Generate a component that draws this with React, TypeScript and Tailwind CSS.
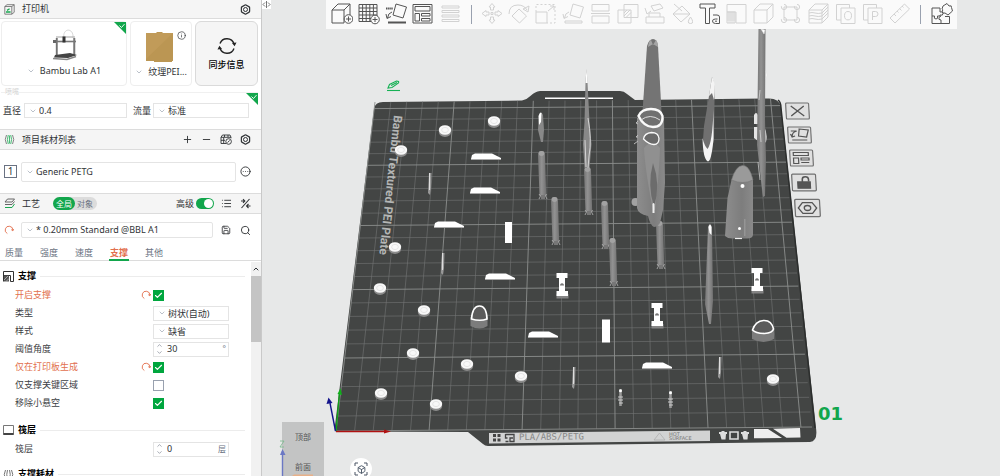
import { useId, useState, type ReactNode } from "react";
import {
  Box,
  Check,
  ChevronDown,
  ChevronUp,
  CircleEllipsis,
  Hexagon,
  Info,
  List,
  Minus,
  Plus,
  Save,
  Search,
} from "lucide-react";

/* ---------- small controls ---------- */

interface SelectFieldProps {
  id?: string;
  label?: string;
  options: string[];
  className?: string;
}

function SelectField({ id, label, options, className = "" }: SelectFieldProps) {
  return (
    <div className={`relative flex items-center border border-[#e4e4e4] bg-white ${className}`}>
      <ChevronDown
        className="pointer-events-none absolute left-1 size-2 text-gray-400"
        strokeWidth={2}
      />
      <select
        id={id}
        aria-label={label}
        className="h-full w-full appearance-none bg-transparent pl-[14px] outline-none"
      >
        {options.map((option) => (
          <option key={option}>{option}</option>
        ))}
      </select>
    </div>
  );
}

interface NumberFieldProps {
  id: string;
  initial: number;
  unit: string;
}

function NumberField({ id, initial, unit }: NumberFieldProps) {
  const [value, setValue] = useState(initial);
  return (
    <div className="flex h-[15px] w-[76px] items-center border border-[#e4e4e4] bg-white px-[2px]">
      <div className="flex flex-col text-gray-500">
        <button aria-label="增加" onClick={() => setValue(value + 1)}>
          <ChevronUp className="size-[7px]" strokeWidth={2} />
        </button>
        <button aria-label="减少" onClick={() => setValue(value - 1)}>
          <ChevronDown className="size-[7px]" strokeWidth={2} />
        </button>
      </div>
      <input
        id={id}
        value={value}
        onChange={(e) => setValue(Number(e.target.value) || 0)}
        className="w-full min-w-0 bg-transparent pl-1 text-[9px] outline-none"
      />
      <span className="shrink-0 text-[8px] text-gray-500">{unit}</span>
    </div>
  );
}

function CheckField({ id, initial }: { id: string; initial: boolean }) {
  const [checked, setChecked] = useState(initial);
  return (
    <span className="relative flex size-[11px]">
      <input
        id={id}
        type="checkbox"
        checked={checked}
        onChange={() => setChecked(!checked)}
        className="size-[11px] appearance-none border border-gray-400 bg-white checked:border-[#00a63e] checked:bg-[#00a63e]"
      />
      {checked && (
        <Check
          className="pointer-events-none absolute inset-0 m-auto size-[9px] text-white"
          strokeWidth={3}
        />
      )}
    </span>
  );
}

interface SettingRowProps {
  label: string;
  changed?: boolean;
  children: (id: string) => ReactNode;
}

function SettingRow({ label, changed, children }: SettingRowProps) {
  const id = useId();
  return (
    <div className="flex h-[18px] items-center">
      <label
        htmlFor={id}
        className={changed ? "w-[126px] text-[#e2704e]" : "w-[126px] text-[#3c4043]"}
      >
        {label}
      </label>
      <span className="flex w-3 justify-start">
        {changed && (
          <button aria-label={`重置${label}`}>
            <ResetIcon />
          </button>
        )}
      </span>
      {children(id)}
    </div>
  );
}

function ResetIcon() {
  return (
    <svg viewBox="0 0 12 12" className="size-[10px]" fill="none" stroke="#e2704e" strokeWidth="1.1">
      <path d="M4 10.2A4.6 4.6 0 1 1 10.6 6.4M8.7 5.6l1.9 1.4 1-2.1" />
    </svg>
  );
}

function GearIcon() {
  return (
    <span className="relative flex size-[11px] items-center justify-center">
      <Hexagon className="size-[11px]" strokeWidth={2.6} />
      <span className="absolute size-[5px] rounded-full border border-current" />
    </span>
  );
}

function Corner() {
  return (
    <svg viewBox="0 0 12 12" className="absolute top-0 right-0 size-3">
      <path d="M0 0h12v12z" fill="#12a64c" />
      <path d="M5.5 3.5l2 2 3-3.4" fill="none" stroke="#fff" strokeWidth=".9" />
    </svg>
  );
}

function PanelHeader({
  icon,
  title,
  children,
}: {
  icon: ReactNode;
  title: string;
  children: ReactNode;
}) {
  return (
    <header className="flex h-full items-center gap-[7px] bg-[#f5f5f5] px-1 pr-[10px]">
      {icon}
      <h2>{title}</h2>
      {children}
    </header>
  );
}

/* ---------- sidebar ---------- */

function PrinterSection() {
  return (
    <section>
      <div className="h-[19px] border-b border-[#dcdcdc]">
        <PanelHeader
          title="打印机"
          icon={
            <svg viewBox="0 0 11 11" className="size-[11px]" fill="none" stroke="#666" strokeWidth=".8">
              <path d="M.8 2.5h7v7.7h-7zM.8 2.5L3 .7h7.2v7.6l-2.4 1.9M7.8 2.5L10.2.7" />
              <path d="M2 8h4.6M3 6.400L5.6 4.800" stroke="#1aa851" strokeWidth="1.3" />
            </svg>
          }
        >
          <button aria-label="打印机设置" className="ml-auto">
            <GearIcon />
          </button>
        </PanelHeader>
      </div>

      <div className="flex gap-[3px] pt-[2px] pr-[3px] pl-px">
        <button className="relative flex h-[65px] flex-1 flex-col items-center rounded-sm border border-[#eee] pt-[7px]">
          <Corner />
          <svg viewBox="0 0 25 32" className="h-8 w-[25px]" fill="none">
            <path d="M12 9C10 -1 22 -2 21 9" stroke="#ccc" strokeWidth=".8" />
            <path d="M5 9v18M22 9v18" stroke="#999" strokeWidth="2" />
            <path d="M4.300 9v18M22.800 9v18" stroke="#555" strokeWidth=".7" />
            <path d="M2 12.500h22" stroke="#777" strokeWidth="1.600" />
            <path d="M4 8h19" stroke="#aaa" strokeWidth="1.100" />
            <path d="M10.500 7.500h3v6h-3z" fill="#333" />
            <path d="M1 11h3v3H1z" fill="#666" />
            <path d="M3 26l15-2 7 2-9 3-14-.5z" fill="#444" />
            <path d="M1 29.500l14 1 9-3" stroke="#888" strokeWidth="1.600" />
          </svg>
          <span className="mt-[3px] flex items-center gap-[5px] text-[9px] leading-[14px]">
            <ChevronDown className="size-2 text-gray-400" />
            Bambu Lab A1
          </span>
        </button>
        <button className="relative flex h-[65px] w-[62px] flex-col items-center rounded-sm border border-[#eee] pt-[10px]">
          <Info className="absolute top-[9px] right-[5px] size-[9px]" strokeWidth={1.8} />
          <svg viewBox="0 0 29 31" className="mr-1 h-[31px] w-[29px]">
            <path d="M1 1h10l1-1h5l1 1h10v28h-1v1H9v-1H1z" fill="#bb9653" />
            <path d="M1 1h27L1 27z" fill="#c19b59" />
          </svg>
          <span className="mt-[2px] flex items-center gap-[5px] leading-[14px]">
            <ChevronDown className="size-2 text-gray-400" />
            纹理PEI...
          </span>
        </button>
        <button className="flex h-[65px] w-[63px] flex-col items-center rounded-md border border-[#dadada] bg-[#f5f5f5] pt-[14px]">
          <svg viewBox="0 0 20 20" className="size-5" fill="none" stroke="#222" strokeWidth="1.4">
            <path d="M3 7.5A7.4 7.4 0 0 1 17 8M17 12.5A7.4 7.4 0 0 1 3 12" />
            <path d="M15 7l4.500-.5L17.600 10.300zM5 13l-4.500.5L2.400 9.700z" fill="#222" stroke="none" />
          </svg>
          <span className="mt-[2px] leading-[14px] font-medium text-black">同步信息</span>
        </button>
      </div>

      <fieldset className="relative mt-[6px] mr-[3px] ml-px flex h-9 items-center border-t border-[#f0f0f0] pr-[9px] pl-[2px]">
        <legend className="absolute -top-[5px] left-1 bg-white text-[7px] leading-[8px] text-[#d2d2d2]">
          喷嘴
        </legend>
        <Corner />
        <label htmlFor="diameter" className="w-[21px]">
          直径
        </label>
        <SelectField id="diameter" options={["0.4", "0.6"]} className="h-[15px] flex-1" />
        <label htmlFor="flow" className="ml-[6px] w-[20px]">
          流量
        </label>
        <SelectField id="flow" options={["标准", "高流量"]} className="h-[15px] w-[96px]" />
      </fieldset>
    </section>
  );
}

function FilamentSection() {
  return (
    <section>
      <div className="mt-[1px] h-[21px] border-y border-[#dcdcdc]">
        <PanelHeader
          title="项目耗材列表"
          icon={
            <svg viewBox="0 0 11 11" className="size-[11px]" fill="none" stroke="#777" strokeWidth=".9">
              <path d="M2.500 1Q0 5.500 2.500 10M8.500 1Q11 5.500 8.500 10" />
              <path d="M4.300 1Q2.500 5.500 4.300 10M6.700 1Q8.500 5.500 6.700 10M5.500 1.500v8" stroke="#35b568" />
            </svg>
          }
        >
          <div className="ml-auto flex items-center gap-2">
            <button aria-label="添加耗材">
              <Plus className="size-[11px]" />
            </button>
            <button aria-label="删除耗材">
              <Minus className="size-[11px]" />
            </button>
            <button aria-label="同步耗材">
              <svg viewBox="0 0 12 11" className="h-[11px] w-3" fill="none" stroke="currentColor" strokeWidth=".9">
                <path d="M6 9.500H1V3.300L2.500 1h7.500l1 2.300v1M1 3.300h10M3.700 3.300v6M1 6.300h4M4.500 1v2M8 1v2" />
                <circle cx="8.600" cy="7.500" r="2.800" />
                <path d="M7.500 8.500l2.200-2" />
              </svg>
            </button>
            <button aria-label="耗材设置">
              <GearIcon />
            </button>
          </div>
        </PanelHeader>
      </div>
      <div className="flex h-[43px] items-center pr-[10px] pl-1">
        <span className="mr-1 flex size-[13px] items-center justify-center border border-gray-500 text-[10px]">
          1
        </span>
        <SelectField label="耗材" options={["Generic PETG"]} className="h-5 flex-1 rounded-xs" />
        <button aria-label="更多" className="ml-1">
          <CircleEllipsis className="size-[11px]" strokeWidth={2} />
        </button>
      </div>
    </section>
  );
}

const TABS = ["质量", "强度", "速度", "支撑", "其他"];

function ProcessSection() {
  const [tab, setTab] = useState("支撑");
  const [advanced, setAdvanced] = useState(true);
  return (
    <section>
      <div className="h-[21px] border-y border-[#dcdcdc]">
        <PanelHeader
          title="工艺"
          icon={
            <svg viewBox="0 0 11 11" className="size-[11px]" fill="none" stroke="#666">
              <path d="M3.500 1h7L8 4H1zM1 6.500h7l2.500-3" />
              <path d="M1 9.500h7L10.500 6" stroke="#1aa851" />
            </svg>
          }
        >
          <div className="ml-[6px] flex h-[13px] items-center rounded-full bg-[#dcdcdc] text-[8px]">
            <button className="h-[13px] rounded-full bg-[#12a64c] px-[3px] leading-[13px] text-white">
              全局
            </button>
            <button className="px-[2px] pr-1 leading-[13px] text-gray-500">对象</button>
          </div>
          <div className="ml-auto flex items-center">
            <label htmlFor="advanced">高级</label>
            <span className="relative mr-[7px] ml-[2px] flex h-[11px] w-[18px]">
              <input
                id="advanced"
                type="checkbox"
                role="switch"
                checked={advanced}
                onChange={() => setAdvanced(!advanced)}
                className="peer h-[11px] w-[18px] appearance-none rounded-full bg-gray-400 checked:bg-[#12a64c]"
              />
              <span className="pointer-events-none absolute top-px left-px size-[9px] rounded-full bg-white peer-checked:left-2" />
            </span>
            <button aria-label="列表" className="mr-2">
              <List className="size-[11px]" />
            </button>
            <button aria-label="对比">
              <svg viewBox="0 0 11 11" className="size-[11px]" fill="none" stroke="currentColor" strokeWidth="1.100">
                <path d="M9.500 1L1.500 10M1 3h3.500M3 1.200L4.800 3 3 4.800M10.500 8H7M8.500 6L6.600 8l1.900 2" />
              </svg>
            </button>
          </div>
        </PanelHeader>
      </div>

      <div className="flex h-8 items-center pr-[10px] pl-1">
        <button aria-label="重置预设" className="mr-[7px]">
          <ResetIcon />
        </button>
        <SelectField
          label="预设"
          options={["* 0.20mm Standard @BBL A1"]}
          className="h-4 flex-1 rounded-xs"
        />
        <button aria-label="保存" className="ml-2">
          <Save className="size-[10px]" />
        </button>
        <button aria-label="搜索" className="ml-[9px]">
          <Search className="size-[11px]" />
        </button>
      </div>

      <nav className="flex h-[15px] gap-[15px] border-b border-[#dcdcdc] pl-1">
        {TABS.map((name) => (
          <button
            key={name}
            onClick={() => setTab(name)}
            className={
              name === tab
                ? "-mb-px border-b-2 border-[#12a64c] px-px font-bold text-[#e2704e]"
                : "-mb-px border-b-2 border-transparent px-px text-gray-500"
            }
          >
            {name}
          </button>
        ))}
      </nav>
    </section>
  );
}

function GroupTitle({ icon, title }: { icon: ReactNode; title: string }) {
  return (
    <div className="flex h-5 items-center gap-1 pr-[6px] pl-[3px]">
      {icon}
      <h3 className="font-bold text-black">{title}</h3>
      <span className="h-px flex-1 bg-[#ececec]" />
    </div>
  );
}

function Settings() {
  return (
    <div className="flex min-h-0 flex-1">
      <div className="min-w-0 flex-1 overflow-hidden pt-[5px]">
        <GroupTitle
          title="支撑"
          icon={
            <svg viewBox="0 0 11 11" className="size-[11px]" fill="none" stroke="#333">
              <path d="M.5 10.500V.5h10v10h-3v-6h-7" />
              <path d="M1 4.500h5v6H1z" fill="#555" stroke="none" />
              <path d="M1 9l4-4M3 10.500l3-3" stroke="#ddd" strokeWidth=".6" />
            </svg>
          }
        />
        <div className="pl-[15px]">
          <SettingRow label="开启支撑" changed>
            {(id) => <CheckField id={id} initial />}
          </SettingRow>
          <SettingRow label="类型">
            {(id) => (
              <SelectField id={id} options={["树状(自动)", "普通(自动)"]} className="h-[15px] w-[76px]" />
            )}
          </SettingRow>
          <SettingRow label="样式">
            {(id) => <SelectField id={id} options={["缺省"]} className="h-[15px] w-[76px]" />}
          </SettingRow>
          <SettingRow label="阈值角度">
            {(id) => <NumberField id={id} initial={30} unit="°" />}
          </SettingRow>
          <SettingRow label="仅在打印板生成" changed>
            {(id) => <CheckField id={id} initial />}
          </SettingRow>
          <SettingRow label="仅支撑关键区域">
            {(id) => <CheckField id={id} initial={false} />}
          </SettingRow>
          <SettingRow label="移除小悬空">
            {(id) => <CheckField id={id} initial />}
          </SettingRow>
        </div>
        <div className="mt-2">
          <GroupTitle
            title="筏层"
            icon={
              <svg viewBox="0 0 11 11" className="size-[11px]" fill="none" stroke="#777">
                <path d="M.5.5h10v9H.5z" />
                <path d="M.5 9h10" stroke="#444" strokeWidth="2" />
              </svg>
            }
          />
          <div className="pl-[15px]">
            <SettingRow label="筏层">
              {(id) => <NumberField id={id} initial={0} unit="层" />}
            </SettingRow>
          </div>
        </div>
        <div className="mt-[6px]">
          <GroupTitle
            title="支撑耗材"
            icon={
              <svg viewBox="0 0 11 11" className="size-[11px]" fill="none" stroke="#777">
                <path d="M2.500 1Q0 5.500 2.500 10M4.500 1Q3 5.500 4.500 10M6.500 1Q8 5.500 6.500 10M8.500 1Q11 5.500 8.500 10" />
              </svg>
            }
          />
        </div>
      </div>
      <div className="mt-px flex w-[10px] flex-col bg-[#f1f1f1]">
        <button aria-label="向上滚动" className="flex h-[14px] items-center justify-center">
          <ChevronUp className="size-2" strokeWidth={3} />
        </button>
        <span className="h-[66px] bg-[#c4c4c4]" />
      </div>
    </div>
  );
}

/* ---------- toolbar ---------- */

interface Tool {
  name: string;
  active?: boolean;
  art: ReactNode;
}

const leftTools: Tool[] = [
  {
    name: "添加模型",
    active: true,
    art: (
      <>
        <path d="M1 7h12v13H1zM1 7l6-6h12l-6 6M19 1v11" />
        <circle cx="17.500" cy="16" r="4.300" fill="#fafafa" />
        <path d="M17.500 13.500v5M15 16h5" />
      </>
    ),
  },
  {
    name: "添加盘",
    active: true,
    art: (
      <>
        <path d="M1 1.500h18v17H1zM1 5h18M1 8.500h18M1 12h18M1 15.500h18M4.600 1.500v17M8.200 1.500v17M11.800 1.500v17M15.400 1.500v17" />
        <circle cx="17" cy="16.500" r="4.300" fill="#fafafa" />
        <path d="M17 14v5M14.500 16.500h5" />
      </>
    ),
  },
  {
    name: "自动朝向",
    active: true,
    art: (
      <>
        <path d="M11 1l10.500 3-3.500 11L8 12z" />
        <path d="M3 19.500h18" strokeWidth="2" />
        <path d="M1 5.500h7" strokeDasharray="1.500 .6" strokeWidth="2" />
        <path d="M7 9Q3 10 2.500 15M1 11l1 4.500 4-2" />
      </>
    ),
  },
  {
    name: "全局整理",
    active: true,
    art: <path d="M1 1.500h19v18.500H1zM3 3.500h15v4.500H3zM3 10.500h4.500v7.500H3zM9.500 10.500H18v2.500H9.500zM9.500 15.500H18V18H9.500z" />,
  },
  {
    name: "图层",
    art: <path d="M2 3h17v2H2zM2 7.500h17v2H2zM2 12h17v2H2zM2 16.500h17v2H2z" />,
  },
];

const editTools: Tool[] = [
  {
    name: "移动",
    art: (
      <path d="M8 4l3-3.500L14 4h-1.500v3h-3V4zM8 17l3 3.500 3-3.500h-1.500v-3h-3v3zM5 7.500L1 10.500l4 3V12h3V9H5zM17 7.500l4 3-4 3V12h-3V9h3zM10 9.500h2v2h-2z" />
    ),
  },
  { name: "旋转", art: <path d="M11 6l7.500 7-7 7L4 13zM1 11Q1 2 10 2q6 0 9 5M21 3l-1 6-5-3z" /> },
  {
    name: "缩放",
    art: (
      <>
        <path d="M1 9h11v11H1zM13 8l6-5M15 3h4v4" />
        <path d="M1 9V1.500h19V20h-8" strokeDasharray="2 2" />
      </>
    ),
  },
  {
    name: "放平",
    art: <path d="M11 1l10.500 3-3.500 11L8 12zM3 18h17v2H3zM7 9Q3 10 2.500 15M1 11l1 4.500 4-2" />,
  },
  { name: "切割", art: <path d="M2 1.500h17v6.500H2zM2 13h17v7H2zM1 10.500h19" /> },
  { name: "布尔运算", art: <path d="M7 1.500h14v13H7zM1 7h13v13H1zM7 10l3-3M7 13l6-6M9 14.500l5-5" /> },
  { name: "支撑绘制", art: <path d="M2 14h18v6H2zM5 10h11v4M5 14v-4M7 3l9-2 3 4-9 3zM1 5l2 6 4-3" /> },
  {
    name: "涂色",
    art: <path d="M2 11l9-8 8 8-9 8zM2 11h17M3 1l8 7M19.500 14q-4.500 6.500 0 6.500t0-6.500" />,
  },
  {
    name: "文字",
    active: true,
    art: (
      <>
        <path d="M1 1h15v4h-5.500v15.500H6.500V5H1z" />
        <path d="M14 12h4q2.500 0 2.500 2v6.500h-4q-3 0-3-2.500 0-2 3-2h2M16 18.200h2" />
      </>
    ),
  },
  {
    name: "接缝绘制",
    art: (
      <>
        <path d="M1 1.500h19V20H10V9H1z" />
        <path d="M1 9h8v11H1z" />
        <path d="M1 11h8M1 13h8M1 15h8M1 17h8M3 9v11M5 9v11M7 9v11" strokeWidth=".8" />
      </>
    ),
  },
  { name: "拼装", art: <path d="M1 7h13v13H1zM1 7l6-6h13v13l-6 6M14 7l6-6" /> },
  {
    name: "网格",
    art: (
      <>
        <path d="M4 4h13v13H4z" />
        <circle cx="4" cy="4" r="2.600" strokeDasharray="9 3" />
        <circle cx="17" cy="4" r="2.600" strokeDasharray="9 3" />
        <circle cx="4" cy="17" r="2.600" strokeDasharray="9 3" />
        <circle cx="17" cy="17" r="2.600" strokeDasharray="9 3" />
      </>
    ),
  },
  {
    name: "可变层高",
    art: (
      <path d="M1 7h13v13H1zM1 7l6-6h13v13l-6 6M14 7l6-6M1 10q3-1 6 0t7 0l6-6M1 13q3-1 6 0t7 0l6-6M1 16q3-1 6 0t7 0l6-6" />
    ),
  },
  { name: "O", art: <path d="M6 5h14v15.500H6zM6 17H1.500V1.500h13V5M13 8.500q-3.500 0-3.500 4.200t3.500 4.200 3.500-4.200T13 8.500" /> },
  { name: "P", art: <path d="M6 5h14v15.500H6zM6 17H1.500V1.500h13V5M10.500 17V8.500h3q2.500 0 2.500 2.500t-2.500 2.500h-3" /> },
  { name: "测量", art: <path d="M1 15L15.500 1l5 5L6 20zM5 11l2 2M8 8l1.500 1.500M10.500 5.500l2 2M13 3l1.500 1.500" /> },
];

const assemblyTool: Tool = {
  name: "装配体",
  active: true,
  art: (
    <>
      <path d="M1 5h8v4q3-1 3 1.500T9 12v1H6.500q1 3-1.500 3t-1.500-3H1zM1 13v7.500h9V17q-3 0-2-2.500l2-1.500M10 20.500h8.500v-7H14" />
      <path d="M12 3l4-2.500 2 2.500q3-1 2.500 1.500L21.500 8 17 12l-3-2q-3 1-2.500-1.500T11 6z" />
    </>
  ),
};

function ToolButton({ tool }: { tool: Tool }) {
  return (
    <button
      aria-label={tool.name}
      className={
        tool.active
          ? "flex flex-1 items-center justify-center text-[#555]"
          : "flex flex-1 items-center justify-center text-[#d2d2d2]"
      }
    >
      <svg viewBox="0 0 22 22" className="size-[22px]" fill="none" stroke="currentColor" strokeWidth="1">
        {tool.art}
      </svg>
    </button>
  );
}

function ToolDivider() {
  return (
    <span className="flex w-[14px] items-center justify-center">
      <span className="h-[19px] w-px bg-gray-400" />
    </span>
  );
}

function Toolbar() {
  return (
    <div className="relative mr-[43px] ml-16 flex h-[29px] bg-[#fafafa] px-[2px] pb-px">
      {leftTools.map((tool) => (
        <ToolButton key={tool.name} tool={tool} />
      ))}
      <ToolDivider />
      {editTools.map((tool) => (
        <ToolButton key={tool.name} tool={tool} />
      ))}
      <ToolDivider />
      <ToolButton tool={assemblyTool} />
    </div>
  );
}

/* ---------- 3D scene ---------- */

// Projects a bed position in mm to the screen, origin at front left
const BED = 256;
const NEAR_L = [336, 431];
const NEAR_R = [812, 427];
const FAR_L = [375, 102];
const FAR_R = [780, 99];

function project(u: number, v: number) {
  const s = u / BED;
  const t = v / BED;
  const dx1 = NEAR_R[0] - FAR_R[0];
  const dx2 = FAR_L[0] - FAR_R[0];
  const dx3 = NEAR_L[0] - NEAR_R[0] + FAR_R[0] - FAR_L[0];
  const dy1 = NEAR_R[1] - FAR_R[1];
  const dy2 = FAR_L[1] - FAR_R[1];
  const dy3 = NEAR_L[1] - NEAR_R[1] + FAR_R[1] - FAR_L[1];
  const det = dx1 * dy2 - dx2 * dy1;
  const g = (dx3 * dy2 - dx2 * dy3) / det;
  const h = (dx1 * dy3 - dx3 * dy1) / det;
  const w = g * s + h * t + 1;
  const x =
    ((NEAR_R[0] - NEAR_L[0] + g * NEAR_R[0]) * s + (FAR_L[0] - NEAR_L[0] + h * FAR_L[0]) * t + NEAR_L[0]) / w;
  const y =
    ((NEAR_R[1] - NEAR_L[1] + g * NEAR_R[1]) * s + (FAR_L[1] - NEAR_L[1] + h * FAR_L[1]) * t + NEAR_L[1]) / w;
  return `${x.toFixed(1)} ${y.toFixed(1)}`;
}

function gridPath(major: boolean) {
  const parts: string[] = [];
  for (let mm = 0; mm <= 250; mm += 10) {
    if ((mm % 50 === 0) !== major) continue;
    parts.push(`M${project(mm, 0)}L${project(mm, BED)}`);
    parts.push(`M${project(0, mm)}L${project(BED, mm)}`);
  }
  return parts.join("");
}

const discs = [
  [445, 130], [494, 121], [401, 150], [395, 247], [380, 288], [424, 310],
  [413, 353], [467, 364], [521, 376], [381, 393], [436, 404], [773, 379],
];
const wedges = [[471, 153], [470, 187], [434, 221], [485, 273], [528, 331], [642, 362]];
const rods = [[542, 151], [555, 197], [605, 201], [613, 238], [660, 221], [588, 167]];
const spools = [[562, 273], [657, 303], [757, 268]];
const slivers = [[429, 173], [442, 253], [573, 367], [719, 357]];
const pins = [[620, 389], [670, 391]];

function Parts() {
  return (
    <>
      {discs.map(([x, y]) => (
        <g key={`${x}-${y}`}>
          <ellipse cx={x} cy={y + 2} rx="6.200" ry="5" fill="#8b8b8b" />
          <ellipse cx={x} cy={y} rx="6.200" ry="4.800" fill="#f8f8f8" />
          <ellipse cx={x} cy={y} rx="3.400" ry="2.600" fill="none" stroke="#ddd" strokeWidth=".7" />
        </g>
      ))}
      {wedges.map(([x, y]) => (
        <g key={`${x}-${y}`} transform={`translate(${x} ${y})`}>
          <path d="M0 6L1 2 4 .5h17L30 5v1.500H0z" fill="#fff" />
          <path d="M0 6h30v1H0z" fill="#aaa" />
        </g>
      ))}
      <path d="M505 222h7v21h-7zM602 319.500h8v23h-8z" fill="#fff" />
      {rods.map(([x, y]) => (
        <g key={`${x}-${y}`} transform={`translate(${x} ${y})`}>
          <path d="M-4 4Q-4 0-.5 0T3 4L4.200 45H-2.500z" fill="url(#metal)" />
          <path d="M-3 43l1.500 2-1.500 3M4.500 43l-1 2 1.500 3" stroke="#b5b5b5" strokeWidth=".8" fill="none" />
          <path d="M-1 44h4v4h-4z" fill="#777" />
          <ellipse cx="-.5" cy="2.500" rx="2.800" ry="2.400" fill="#a2a2a2" />
        </g>
      ))}
      {spools.map(([x, y]) => (
        <g key={`${x}-${y}`} transform={`translate(${x} ${y})`}>
          <path d="M-5.500 21h12v4.500h-12z" fill="#858585" />
          <path d="M-5.500 0H5.500v5H3v13h3v5H-5.500v-5H-3V5h-2.500z" fill="#fff" />
          <path d="M-2 11.500q2-2.500 4 0v1h-4z" fill="#777" />
        </g>
      ))}
      {slivers.map(([x, y]) => (
        <g key={`${x}-${y}`}>
          <path d={`M${x} ${y}l2.500 0-.5 15-1 7-2-2z`} fill="#999" />
          <path d={`M${x + 0.5} ${y}v17`} stroke="#ddd" />
        </g>
      ))}
      {pins.map(([x, y]) => (
        <g key={`${x}-${y}`} transform={`translate(${x} ${y})`} fill="none" stroke="#c9c9c9">
          <path d="M.5 0v17" stroke="#999" strokeWidth="2.600" />
          <path d="M-2 8h5M-2 11h5M-1 14h4" />
          <circle cx=".5" cy="1.700" r="1.500" fill="#fff" stroke="none" />
        </g>
      ))}

      {/* small blade and tall fin */}
      <path d="M539 115q2-5 4 0l1 15-1 12h-2l-3-12z" fill="#888" />
      <path d="M538.500 116q1.500-5 3-3l-.5 9-2 3z" fill="#fff" />
      <path d="M585.500 82L586.500 69l1 13 2 40 2 22-2 24h-5l-1.500-24 1.500-22z" fill="#888" />
      <path d="M585.500 83l1-14 1.200 14z" fill="#fff" />
      <path d="M588 118q4 22 1 38l-1 12M585 140l1 27" stroke="#ddd" strokeWidth=".9" fill="none" />

      {/* fuselage */}
      <path d="M647 46q2-7 6-7t5 7l3.500 66h-19z" fill="#747474" />
      <path d="M648 47q1-7 3-7l2 5 3-5q2 2 2 7l-5-3z" fill="#a5a5a5" />
      <circle cx="635.500" cy="202" r="4" fill="#a2a2a2" />
      <path d="M637 118h27l1 65-2 27-3 13q-3 4-6 4-4-2-6-11-10-2-11-8z" fill="url(#body)" />
      <path d="M644 148q8-10 16 0-1 28-5 62h-2q-8-40-9-62z" fill="#909090" />
      <path d="M653 163q8 22 1 44-7-22-1-44" fill="#6c6c6c" />
      <path d="M652.500 204q1-2 2 0v9h-2z" fill="#eee" />
      <path
        d="M638.500 116q3-7 12.500-7t11.500 7q.5 11-9.500 11-9 0-14.500-11z"
        fill="#707070"
        stroke="#fafafa"
        strokeWidth="2.400"
      />
      <path d="M641 120q9-7 19 0" stroke="#ddd" fill="none" />
      <path
        d="M643.500 139q1-6 8-6.500 7 0 7.500 6 0 6-5 6-5 0-10.500-5.500z"
        fill="#6a6a6a"
        stroke="#fafafa"
        strokeWidth="1.300"
      />
      <path d="M638 121l-2 2 2 1M638 135l-2 2h2M638 141l-4 3" stroke="#bbb" fill="none" />

      {/* canopy shells */}
      <path d="M712 77q3 5 2.500 25l-.5 38-5 21q-4 1-6-21l1-14 5-30z" fill="#707070" />
      <path
        d="M712 77q4 5 2 23l-2-7-3 3zM702.500 138q2 8 5 11 5-6 6-40v30q-2 22-5.500 22.500-5-2-5.500-23.500z"
        fill="#f4f4f4"
      />
      <path d="M754 115q2-4 4 0v9h-4zM764 126q4 8 2 16l-3 2zM754 127h4v14l-4-3z" fill="#e5e5e5" />
      <path d="M758.500 29h7l-.5 90 1 40-1 37-2 1-6-52z" fill="url(#metal)" />
      <path d="M761 29l4 1-1 4zM766 71q2 4 0 8" fill="#fff" stroke="#ddd" strokeWidth=".6" />
      <path d="M760 90l-1 10M760 130l1 12M758 162l2 18" stroke="#ddd" strokeWidth=".7" fill="none" />

      {/* nose capsule */}
      <path d="M731.500 180l-4 18-2.500 38q3 3 9 2.500h13q6 0 6-4V180z" fill="url(#body)" />
      <path d="M731.500 180q4-14 11-14.500t10.500 14.500q-10 5-21.500 0z" fill="#9a9a9a" stroke="#777" strokeWidth=".6" />
      <path d="M744 219h1.500v17H744z" fill="#959595" />
      <circle cx="742.500" cy="186" r="2" fill="#fff" />
      <circle cx="739.500" cy="228.500" r="1.500" fill="#fff" />
      <path d="M735 238.500h7" stroke="#eee" strokeWidth="1.200" />

      <path d="M708 227q2-6 4 0l1 74-2 23h-2l-4-20z" fill="url(#metal)" />
      <path d="M708.500 227q1.500-5 3 0v8l-2-2z" fill="#fff" />

      {/* open cups */}
      <path d="M470.500 317h17v9q-8 5-17 0z" fill="#7c7c7c" />
      <path d="M471.500 319q1-13 8-13t7.500 13q-7 2.500-15.500 0z" fill="#5b5b5b" stroke="#fff" strokeWidth="1.700" />
      <path d="M752 330h22v9q-10 6-22 0z" fill="#7c7c7c" />
      <path
        d="M752.500 330q3-9 11-9.500t10 8.500q-1 4-9 4.500-9 0-12-3.500z"
        fill="#5b5b5b"
        stroke="#fff"
        strokeWidth="1.600"
      />
    </>
  );
}

function Scene() {
  return (
    <svg
      viewBox="262 0 738 476"
      preserveAspectRatio="xMidYMid slice"
      className="absolute inset-0 size-full"
      fontFamily="Inter, 'Noto Sans CJK SC', sans-serif"
    >
      <defs>
        <linearGradient id="metal">
          <stop offset="0" stopColor="#757575" />
          <stop offset=".45" stopColor="#929292" />
          <stop offset="1" stopColor="#727272" />
        </linearGradient>
        <linearGradient id="body">
          <stop offset="0" stopColor="#8d8d8d" />
          <stop offset=".6" stopColor="#7d7d7d" />
          <stop offset="1" stopColor="#8a8a8a" />
        </linearGradient>
      </defs>

      {/* build plate */}
      <path
        d="M383 102l139-1.500q5-1 9-5 4-4 9-4.500h80q4 0 7 3l8 6 134-1.500q10 0 12 8L816 428q2 13-6 14l-322 4q-3 0-5-2l-15-12-132-.5q-2 0-1-6L374 109q1-7 9-7z"
        fill="#434544"
      />
      <path d="M545 97.500h68v1.500h-68z" fill="#fff" />
      <path d={gridPath(false)} stroke="#747675" strokeWidth=".6" fill="none" />
      <path d={gridPath(true)} stroke="#8c8e8d" strokeWidth=".9" fill="none" />
      <path d="M778 100q3 2 3 8l34 320" stroke="#2c2e2d" strokeWidth="1.500" fill="none" />
      <text
        transform="translate(394 115) rotate(96)"
        fontSize="12"
        fontWeight="700"
        fill="#b4b6b5"
        fontFamily="Roboto, sans-serif"
      >
        Bambu Textured PEI Plate
      </text>

      {/* front label strip */}
      <path d="M489 433l221-2.500v10.500l-221 2.500z" fill="#d2d3d3" />
      <path d="M493 434h3v3h-3zM497.500 434h3v3h-3zM493 438.500h3v3h-3zM497.500 438.500h3v3h-3z" fill="#444" />
      <path d="M505.500 434.500h8.500v7h-4v-3.500h3M505.500 434v4h2M505.500 441.500h3" stroke="#444" strokeWidth="1.300" fill="none" />
      <text
        x="519"
        y="440"
        fontSize="9"
        fill="#888"
        fontFamily="'DejaVu Sans Mono', monospace"
        transform="rotate(-.6 519 440)"
      >
        PLA/ABS/PETG
      </text>
      <path d="M654 440l5.500-7 5.500 7z" fill="none" stroke="#aaa" strokeWidth=".7" />
      <text x="669" y="435.500" fontSize="5" fill="#777" fontFamily="'DejaVu Sans', sans-serif">
        HOT
      </text>
      <text x="669" y="440" fontSize="5" fill="#777" fontFamily="'DejaVu Sans', sans-serif">
        SURFACE
      </text>
      <path
        d="M719 432h2l1-1h2l1 1h2v2h-1l-.5 5.500h-4L720 434h-1zM741 432h2l1-1h2l1 1h2v2h-1l-.5 5.500h-4L742 434h-1z"
        fill="#ddd"
      />
      <path d="M730 432h8v7h-8z" fill="none" stroke="#ddd" strokeWidth="1.600" />
      <path d="M754 429h14l14 9-28 .3zM773 428.800l27-.8.500 9.500-14 .3z" fill="#eee" />

      <Parts />

      {/* axes */}
      <g fill="none" strokeWidth="1.400">
        <path d="M336 431.500h49" stroke="#b01212" />
        <path d="M336 431l3.500-38" stroke="#10a01a" />
        <path d="M335.500 431l-5.500-28" stroke="#14148c" />
      </g>
      <path d="M384 429.500l7 2-7 2z" fill="#b01212" />
      <path d="M337.500 394l3-6 1.500 7z" fill="#10b01a" />
      <path d="M326.500 404l2-6.500 4 5.500z" fill="#14148c" />

      {/* rename pencil */}
      <path d="M387 90.500h13" stroke="#17b155" strokeWidth="1.100" />
      <path
        d="M388 88l1.500-3.500 7-3.500q3 0 2 2L392 87.500zM391 85.500l6-3"
        fill="none"
        stroke="#17b155"
        strokeWidth="1.100"
      />
      <text x="818" y="420" fontSize="18" fontWeight="700" fill="#12a64c" fontFamily="'DejaVu Sans', sans-serif">
        01
      </text>

      {/* view cube */}
      <path d="M282 422h42v54h-42z" fill="#c3c4c4" />
      <text x="303" y="440" fontSize="8" textAnchor="middle" fill="#555">
        顶部
      </text>
      <text x="303" y="470" fontSize="8" textAnchor="middle" fill="#555">
        前面
      </text>
      <path d="M294 474.500h19V476h-21z" fill="#e8b088" />
      <path d="M282.500 476v-25" stroke="#6b78c4" strokeWidth="1.400" />
      <path d="M280 455l2.500-6 3 6z" fill="#6b78c4" />
      <path d="M280 441h4l-4 6h4" fill="none" stroke="#76b98c" strokeWidth=".8" />
    </svg>
  );
}

const plateActions = [
  {
    name: "删除盘",
    place: "absolute top-[21.500%] left-[70.800%] h-[18px] w-[25px] skew-x-3",
    art: <path d="M6 4l13 10M19 4L6 14" strokeWidth="1.400" />,
  },
  {
    name: "朝向",
    place: "absolute top-[26.400%] left-[71.100%] h-[18px] w-[25px] skew-x-3",
    art: <path d="M12.500 3l9 1-2 7-8-1zM5 14h15M10 5q-5 1-5 6M3.500 8L5 11l3-1M4 5h5" />,
  },
  {
    name: "整理",
    place: "absolute top-[31.300%] left-[71.400%] h-[18px] w-[25px] skew-x-3",
    art: <path d="M4.500 3.500h15v3h-15zM4.500 9h5v5.500h-5zM12 9h8v2h-8zM12 13.500h8" />,
  },
  {
    name: "锁定",
    place: "absolute top-[36.400%] left-[71.700%] h-[19px] w-[26px] skew-x-3",
    art: (
      <>
        <path d="M6.500 8.500h12v6h-12z" fill="#555" />
        <path d="M11 8.500V6q0-2.500 3-2.500t3 2.500v2" strokeWidth="1.500" />
      </>
    ),
  },
  {
    name: "盘设置",
    place: "absolute top-[41.500%] left-[72.100%] h-[20px] w-[27px] skew-x-3",
    art: (
      <>
        <path d="M8 4h9l4 5-4 5H8L4 9z" />
        <ellipse cx="12.500" cy="9" rx="3" ry="2.300" />
      </>
    ),
  },
];

function Viewport() {
  return (
    <main className="relative min-w-0 flex-1 overflow-hidden bg-[#e7e8e8]">
      <Scene />
      {plateActions.map((action) => (
        <button key={action.name} aria-label={action.name} className={action.place}>
          <svg viewBox="0 0 25 18" className="size-full" fill="none" stroke="#555" strokeWidth="1.200">
            <rect x="1" y="1" width="23" height="16" rx="1" fill="#e0e0e0" stroke="#707070" />
            {action.art}
          </svg>
        </button>
      ))}
      <button
        aria-label="收起侧栏"
        className="absolute top-0 left-0 flex h-[9px] w-[9px] items-center justify-center bg-white"
      >
        <svg viewBox="0 0 9 7" className="h-[7px] w-[9px]" fill="none" stroke="#666" strokeWidth=".9">
          <path d="M3 1.500l-2 2 2 2M6 1.500l2 2-2 2M4.500 0v7" />
        </svg>
      </button>
      <button
        aria-label="适应视图"
        className="absolute -bottom-1 left-[88px] flex size-[22px] items-center justify-center rounded-full bg-white text-gray-600"
      >
        <svg viewBox="0 0 14 14" className="absolute size-[14px]" fill="none" stroke="currentColor">
          <path d="M1 4V1h3M10 1h3v3M13 10v3h-3M4 13H1v-3" />
        </svg>
        <Box className="size-[9px]" strokeWidth={2.5} />
      </button>
      <Toolbar />
    </main>
  );
}

export default function App() {
  return (
    <div className="flex h-screen overflow-hidden bg-white font-['Noto_Sans','Noto_Sans_CJK_SC',sans-serif] text-[9px] text-[#303336]">
      <aside className="flex w-[262px] shrink-0 flex-col border-r border-[#c9c9c9]">
        <PrinterSection />
        <FilamentSection />
        <ProcessSection />
        <Settings />
      </aside>
      <Viewport />
    </div>
  );
}
